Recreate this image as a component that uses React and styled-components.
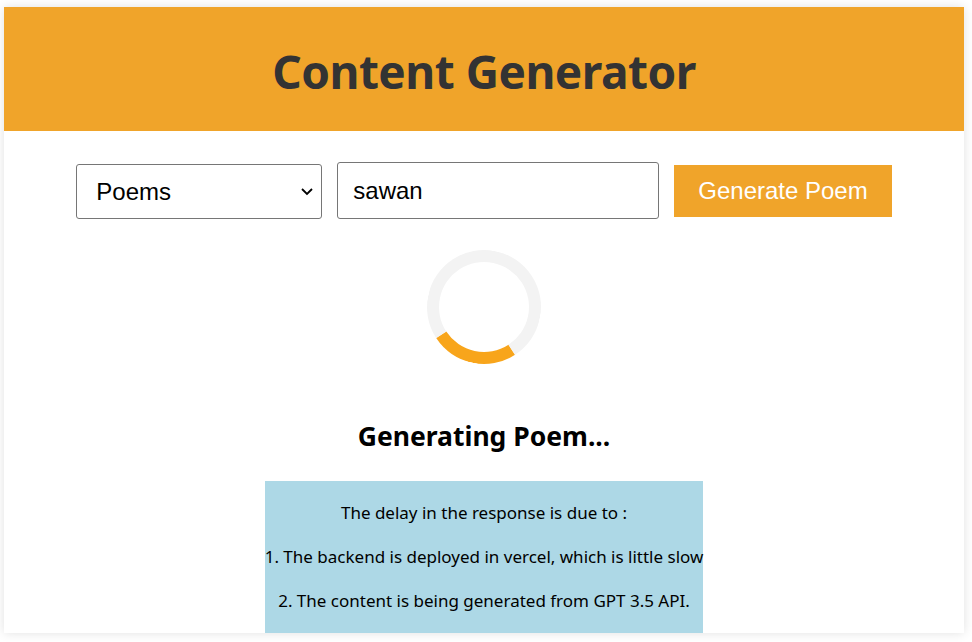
import React, { useState } from "react";
import styled, { createGlobalStyle } from "styled-components";

const GlobalStyle = createGlobalStyle`
body {
  margin: 0;
  background: #ffffff;
  font-family: "Noto Sans", "Open Sans", sans-serif;
}
`;

const Page = styled.div`
width: 960px;
height: 626px;
margin: 7px 8px 9px 4px;
overflow: hidden;
background: #ffffff;
box-shadow: 0 0 10px rgba(0, 0, 0, 0.12);
display: flex;
flex-direction: column;
align-items: center;
`;

const Header = styled.header`
align-self: stretch;
height: 124px;
padding-top: 4px;
box-sizing: border-box;
display: flex;
align-items: center;
justify-content: center;
background-color: #f0a42a;
`;

const Title = styled.h1`
margin: 0;
font-family: "Noto Sans", sans-serif;
font-size: 46px;
font-weight: 700;
color: #333333;
letter-spacing: -0.5px;
`;

const Controls = styled.div`
display: flex;
align-items: center;
gap: 15px;
margin-top: 31px;
`;

const SelectWrap = styled.div`
position: relative;
margin-top: 1px;
`;

const Select = styled.select`
display: block;
width: 246px;
height: 55px;
padding: 0 36px 0 19px;
appearance: none;
font-family: "Liberation Sans", Arial, sans-serif;
font-size: 24px;
color: #000;
background: #fff;
border: 1px solid #767676;
border-radius: 3px;
`;

const Chevron = styled.svg`
position: absolute;
right: 8px;
top: 50%;
width: 14px;
height: 14px;
transform: translateY(-50%);
pointer-events: none;
`;

const Input = styled.input`
box-sizing: border-box;
width: 322px;
height: 57px;
padding: 0 15px;
font-family: "Liberation Sans", Arial, sans-serif;
font-size: 24px;
color: #000;
border: 1px solid #767676;
border-radius: 3px;
outline: none;
`;

const Button = styled.button`
height: 52px;
padding: 0 24px;
font-family: "Liberation Sans", Arial, sans-serif;
font-size: 24px;
color: #ffffff;
background-color: #f0a42a;
border: none;
cursor: pointer;
`;

const Spinner = styled.div`
box-sizing: border-box;
width: 114px;
height: 114px;
margin-top: 31px;
border: 12px solid #f3f3f3;
border-bottom-color: #f8a51b;
border-radius: 50%;
transform: rotate(12deg);
`;

const Status = styled.h2`
margin: 54px 0 0;
font-family: "Noto Sans", sans-serif;
font-size: 26.5px;
font-weight: 700;
color: #000;
`;

const Notice = styled.div`
width: fit-content;
margin-top: 27px;
padding: 0 0 20px;
background-color: #add8e6;
text-align: center;
`;

const NoticeLine = styled.p`
margin: 19px 0 0;
line-height: 25px;
font-family: "Noto Sans", sans-serif;
font-size: 17px;
color: #000;
white-space: nowrap;
`;

export default function App() {
  const [kind, setKind] = useState("Poems");
  const [topic, setTopic] = useState("sawan");

  return (
    <>
      <GlobalStyle />
      <Page>
        <Header>
          <Title>Content Generator</Title>
        </Header>
        <Controls>
          <SelectWrap>
            <Select value={kind} onChange={(e) => setKind(e.target.value)}>
              <option>Poems</option>
              <option>Stories</option>
              <option>Quotes</option>
            </Select>
            <Chevron viewBox="0 0 14 14">
              <path d="M2 5l5 5 5-5" fill="none" stroke="#000" strokeWidth="1.8" />
            </Chevron>
          </SelectWrap>
          <Input value={topic} onChange={(e) => setTopic(e.target.value)} />
          <Button>Generate Poem</Button>
        </Controls>
        <Spinner />
        <Status>Generating Poem...</Status>
        <Notice>
          <NoticeLine>The delay in the response is due to :</NoticeLine>
          <NoticeLine>1. The backend is deployed in vercel, which is little slow</NoticeLine>
          <NoticeLine>2. The content is being generated from GPT 3.5 API.</NoticeLine>
        </Notice>
      </Page>
    </>
  );
}
